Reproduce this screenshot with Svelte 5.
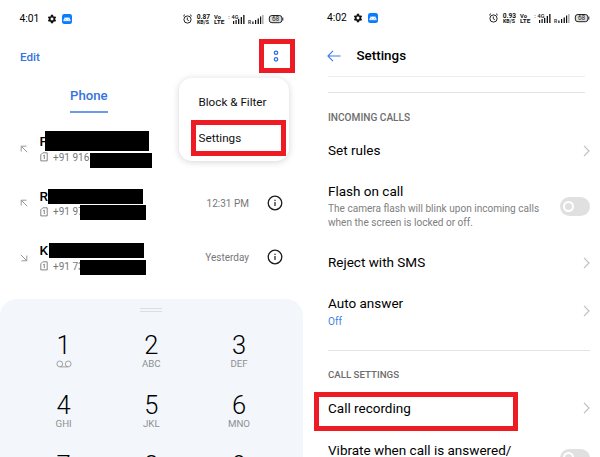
<script>
  const calls = [
    { letter: 'F', num: '+91 9161', out: true, time: '', bars: [[45, 0, 104, 20], [90, 22, 62, 15]] },
    { letter: 'R', num: '+91 97', out: true, time: '12:31 PM', bars: [[48, 3.5, 95, 15], [80, 19.5, 66, 15]] },
    { letter: 'K', num: '+91 73', out: false, time: 'Yesterday', bars: [[49, 3, 95, 15], [80, 20, 66, 15]] }
  ];
  const keys = [
    ['1', ''], ['2', 'ABC'], ['3', 'DEF'],
    ['4', 'GHI'], ['5', 'JKL'], ['6', 'MNO'],
    ['7', ''], ['8', ''], ['9', '']
  ];
</script>

{#snippet status(time, speed)}
  <div class="status">
    <span class="time">{time}</span>
    <svg class="gear" width="10" height="10" viewBox="0 0 24 24">
      <path fill="#111" fill-rule="evenodd" d="M19.600 13a7 7 0 0 0 0-2l2.300-1.800-2.300-4-2.700 1.100a8 8 0 0 0-1.800-1L14.700 2H9.300l-.4 3.300a8 8 0 0 0-1.800 1L4.400 5.200l-2.300 4L4.400 11a7 7 0 0 0 0 2l-2.300 1.800 2.300 4 2.700-1.100a8 8 0 0 0 1.800 1l.4 3.300h5.400l.4-3.300a8 8 0 0 0 1.800-1l2.700 1.100 2.300-4zM12 15.500a3.500 3.500 0 1 1 0-7 3.500 3.500 0 0 1 0 7z" />
    </svg>
    <svg width="10" height="10" viewBox="0 0 10 10">
      <rect width="10" height="10" rx="2.300" fill="#0a7cff" />
      <path d="M1.600 6.800a3.400 3.100 0 0 1 6.800 0zM2.600 3l1 1.500M7.400 3l-1 1.500" fill="#fff" stroke="#fff" stroke-width=".5" />
      <circle cx="3.600" cy="5.600" r=".4" fill="#0a7cff" /><circle cx="6.400" cy="5.600" r=".4" fill="#0a7cff" />
    </svg>
    <svg class="right" width="102" height="12" viewBox="0 0 102 12">
      <g fill="none" stroke="#222" stroke-width="1">
        <circle cx="5.500" cy="6.500" r="3.600" />
        <path d="M5.300 4.500v2.300l1.500.8M1.200 3.200l1.800-1.600M9.800 3.200L8 1.600" />
      </g>
      <g fill="#111" font-family="Roboto, sans-serif" font-weight="700">
        <text x="14.700" y="5.700" font-size="6.300" textLength="13.300" lengthAdjust="spacingAndGlyphs">{speed}</text>
        <text x="15" y="11" font-size="4.700" textLength="12" lengthAdjust="spacingAndGlyphs">KB/S</text>
        <text x="32" y="5.600" font-size="5.800">Vo</text>
        <text x="32" y="11" font-size="5.200" textLength="10.500" lengthAdjust="spacingAndGlyphs">LTE</text>
        <text x="49.500" y="5.800" font-size="5.500" textLength="7" font-weight="500">4G</text>
        <text x="66" y="11" font-size="5" font-weight="500">R</text>
      </g>
      <g fill="#111">
        <path d="M51 8h1.200v3H51zM53.500 7h1.200v4h-1.200zM56 6h1.300v5H56zM58.700 4h1.300v7h-1.300zM61.200 2h1.300v9h-1.300z" />
        <path d="M70.300 8.500h1.200V11h-1.200zM73 7h1.200v4H73zM75.600 5.500h1.300V11h-1.300zM78 3.500h1.200V11H78z" />
        <path d="M80.500 2h.8v9h-.8z" fill="#666" />
        <path d="M46.500 3h1v1h-1zM46.500 5h1v1h-1z" fill="#999" />
      </g>
      <rect x="87.300" y="2.500" width="12.600" height="7.200" rx="2.600" fill="#ddd" stroke="#222" stroke-width="1" />
      <path d="M100.800 4.600v3" stroke="#222" />
      <text x="93.600" y="8.400" font-size="6.500" text-anchor="middle" font-family="Roboto, sans-serif" fill="#222">68</text>
    </svg>
  </div>
{/snippet}

{#snippet chevron()}
  <svg class="chev" width="7" height="12" viewBox="0 0 7 12"><path d="M1 .8L6 6 1 11.200" fill="none" stroke="#bdbdbd" stroke-width="1.100" /></svg>
{/snippet}

{#snippet toggle()}
  <span class="toggle"><i></i></span>
{/snippet}

<main>
  <section class="phone dialer">
    {@render status('4:01', '0.87')}
    <header class="bar">
      <span class="edit">Edit</span>
      <div class="more">
        <svg width="8" height="14" viewBox="0 0 8 14" fill="none" stroke="#2f6fdf" stroke-width="1.250">
          <circle cx="4" cy="3.700" r="1.700" /><circle cx="4" cy="10.300" r="1.700" />
        </svg>
      </div>
    </header>
    <div class="tabs"><span>Phone</span></div>

    <div class="calls">
      {#each calls as c}
        <div class="call">
          <svg class="dir" class:in={!c.out} width="8" height="8" viewBox="0 0 8 8" fill="none" stroke="#999" stroke-width="1"><path d="M1.200 6.500V1.200h5.300M1.200 1.200l6 6" /></svg>
          <div class="who">
            <b>{c.letter}</b>
            <div class="num">
              <svg width="8" height="10" viewBox="0 0 8 10" fill="none" stroke="#777" stroke-width=".9"><path d="M2.800.8h4.400v8.100H.8V2.800zM3.200 3.800l1.100-.7v4" /></svg>
              <span>{c.num}</span>
            </div>
          </div>
          {#if c.time}
            <span class="when">{c.time}</span>
            <svg class="info" width="16" height="16" viewBox="0 0 16 16">
              <circle cx="8" cy="8" r="6.800" fill="none" stroke="#1a1a1a" stroke-width="1.300" />
              <path d="M8 7v4M8 4.700v1.300" stroke="#1a1a1a" stroke-width="1.200" />
            </svg>
          {/if}
          {#each c.bars as b}
            <span class="redact" style="left:{b[0]}px;top:{b[1]}px;width:{b[2]}px;height:{b[3]}px"></span>
          {/each}
        </div>
      {/each}
    </div>

    <div class="pad">
      <div class="handle"></div>
      <div class="keys">
        {#each keys as [d, l]}
          <div class="key">
            <span class="digit">{d}</span>
            {#if l}
              <span class="letters">{l}</span>
            {:else if d === '1'}
              <svg width="16" height="8" viewBox="0 0 16 8" fill="none" stroke="#999" stroke-width=".9"><circle cx="3.800" cy="3.900" r="2.900" /><circle cx="12.200" cy="3.900" r="2.900" /><path d="M3.800 6.900h8.400" /></svg>
            {/if}
          </div>
        {/each}
      </div>
    </div>

    <div class="menu">
      <div>Block &amp; Filter</div>
      <div>Settings</div>
      <span class="mark"></span>
    </div>
  </section>

  <section class="phone settings">
    {@render status('4:02', '0.93')}
    <header class="title">
      <svg width="14" height="12" viewBox="0 0 14 12" fill="none" stroke="#3f7ae6" stroke-width="1.100"><path d="M13.500 6H1M6 .9L.9 6 6 11.100" /></svg>
      <h1>Settings</h1>
    </header>
    <div class="rule"></div>
    <h2>INCOMING CALLS</h2>
    <div class="row rules"><p>Set rules</p>{@render chevron()}</div>
    <div class="row flash">
      <div>
        <p>Flash on call</p>
        <small>The camera flash will blink upon incoming calls<br />when the screen is locked or off.</small>
      </div>
      {@render toggle()}
    </div>
    <div class="row reject"><p>Reject with SMS</p>{@render chevron()}</div>
    <div class="row auto">
      <div><p>Auto answer</p><small class="off">Off</small></div>
      {@render chevron()}
    </div>
    <div class="rule second"></div>
    <h2>CALL SETTINGS</h2>
    <div class="row record"><p>Call recording</p>{@render chevron()}<span class="mark"></span></div>
    <div class="row vibrate"><p>Vibrate when call is answered/</p>{@render toggle()}</div>
  </section>
</main>

<style>
  :global(body) { background: #fff; overflow: hidden; }
  main { display: flex; width: 600px; height: 457px; overflow: hidden; background: #fff; font-family: Roboto, 'Liberation Sans', sans-serif; color: #000; }
  svg { flex: none; display: block; }
  .phone { position: relative; height: 457px; overflow: hidden; box-sizing: border-box; display: flex; flex-direction: column; }
  .dialer { width: 303px; }
  .settings { width: 297px; padding: 0 10px 0 25px; }
  .status { display: flex; align-items: center; height: 37px; flex: none; padding-left: 19.500px; }
  .settings .status { height: 35px; padding-left: 0; margin-left: -1px; }
  .time { font-size: 10.300px; width: 27.500px; white-space: nowrap; }
  .gear { margin-right: 5px; }
  .status .right { margin-left: 109.500px; }
  .settings .status .right { margin-left: 110.500px; }

  .bar { display: flex; justify-content: space-between; height: 40px; flex: none; padding: 2px 8px 0 20px; box-sizing: border-box; }
  .edit { font-size: 11.700px; font-weight: 500; color: #3474e0; line-height: 36px; }
  .more { width: 36px; height: 34px; border: 5px solid #ed1c24; box-sizing: border-box; display: flex; align-items: center; justify-content: center; padding-right: 3px; }
  .tabs { height: 54px; flex: none; padding: 9px 0 0 70px; box-sizing: border-box; }
  .tabs span { display: block; width: 38px; height: 27px; line-height: 20px; font-size: 13.200px; font-weight: 500; color: #3474e0; border-bottom: 2px solid #6c9aea; box-sizing: border-box; }

  .calls { flex: none; height: 168px; }
  .call { position: relative; display: flex; height: 54.500px; }
  .dir { margin: 13.500px 0 0 20px; }
  .dir.in { transform: rotate(180deg); }
  .who { flex: none; margin: 2px 0 0 11.500px; width: 100px; }
  .who b { display: block; font-size: 13.500px; font-weight: 500; line-height: 16px; height: 16px; }
  .num { display: flex; align-items: center; height: 16px; font-size: 10px; color: #777; gap: 5px; padding-left: .5px; white-space: nowrap; }
  .when { flex: none; width: 72px; margin-left: 37.500px; text-align: right; font-size: 10px; color: #777; line-height: 16px; padding-top: 10px; }
  .info { margin: 9px 0 0 18px; }
  .redact { position: absolute; background: #000; }

  .pad { flex: none; height: 200px; width: 302.500px; border-radius: 17px 17px 0 0; background: #f3f7fb; padding-top: 9px; box-sizing: border-box; }
  .handle { width: 22px; height: 2px; margin: 0 auto; border-top: 1px solid #d9dee2; border-bottom: 1px solid #d9dee2; }
  .keys { display: grid; grid-template-columns: repeat(3, 87.700px); padding: 20px 0 0 19.800px; }
  .key { height: 60px; display: flex; flex-direction: column; align-items: center; }
  .digit { font-size: 25.500px; line-height: 27px; font-weight: 300; height: 26px; }
  .letters { font-size: 9.700px; line-height: 12px; color: #8c8f92; }
  .key svg { margin-top: 2px; }

  .menu { position: absolute; left: 179px; top: 78px; width: 109.500px; height: 83px; border-radius: 13px; background: #fff; box-shadow: 0 1px 7px rgba(0, 0, 0, .17); box-sizing: border-box; padding: 7px 0 0 19.500px; font-size: 11.700px; color: #111; }
  .menu div { height: 35.500px; line-height: 35.500px; }
  .mark { position: absolute; border: 5px solid #ed1c24; box-sizing: border-box; }
  .menu .mark { left: 12px; top: 42px; width: 95px; height: 36px; }

  .title { flex: none; display: flex; align-items: center; height: 42px; box-sizing: border-box; border-bottom: 1px solid #eee; margin-right: 5.500px; }
  .title svg { margin-left: -1px; }
  h1 { margin: 0 0 0 15.500px; font-size: 13.400px; font-weight: 500; line-height: 16px; }
  .rule { flex: none; height: 1px; background: #e4e4e4; margin: 15px 5.500px 0 0; }
  .rule.second { margin: 17px 0 0; }
  h2 { flex: none; margin: 17px 0 0; height: 15px; line-height: 16px; font-size: 10.100px; font-weight: 500; color: #6d6d6d; }
  .rule.second + h2 { margin-top: 16px; height: 16.500px; font-size: 9.700px; }
  .row { flex: none; position: relative; display: flex; justify-content: space-between; align-items: center; box-sizing: border-box; }
  p { margin: 0; font-size: 13.500px; line-height: 16px; white-space: nowrap; }
  small { display: block; font-size: 10.080px; line-height: 14px; color: #808080; white-space: nowrap; margin-top: 2.500px; }
  small.off { color: #3f7fe6; margin-top: 4px; }
  .rules { height: 52px; }
  .flash { height: 59px; }
  .reject { height: 54px; }
  .rules p, .reject p, .record p { padding-bottom: 2px; }
  .auto { height: 43px; }
  .auto .chev { margin-bottom: 1px; }
  .record { height: 50px; }
  .record .chev { margin-bottom: 1px; }
  .record .mark { left: -14px; top: 8.500px; width: 204px; height: 39px; }
  .vibrate { height: 34px; align-items: flex-start; padding-top: 8px; }
  .vibrate .toggle { margin-top: 7px; }
  .toggle { flex: none; width: 30px; height: 18.500px; border-radius: 10px; background: #e0e0e0; display: flex; align-items: center; padding-left: 3px; box-sizing: border-box; }
  .toggle i { width: 11px; height: 11px; border: 2.500px solid #fff; border-radius: 50%; box-sizing: border-box; }
</style>
